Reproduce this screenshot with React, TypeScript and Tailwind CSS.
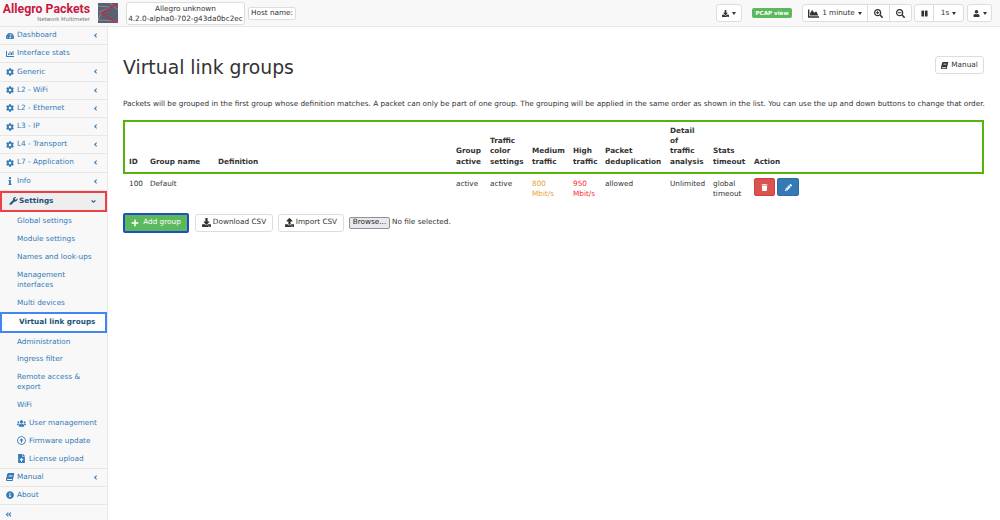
import React from 'react';
import {
  FaTachometerAlt, FaChartBar, FaCog, FaInfo, FaWrench, FaUsers, FaBook, FaInfoCircle, FaFileUpload,
  FaAngleLeft, FaAngleDown, FaAngleDoubleLeft, FaDownload, FaUpload, FaChartArea, FaSearchPlus, FaSearchMinus,
  FaPause, FaUser, FaPlus, FaTrash, FaPencilAlt, FaRegArrowAltCircleUp,
} from 'react-icons/fa';

const navLink = 'text-[#337ab7]';

const NavItem = ({ icon, label, arrow = true }: { icon: React.ReactNode; label: string; arrow?: boolean }) => (
  <div className={`h-[18.2px] flex items-center pl-[6px] pr-[6px] border-b border-[#e7e7e7] ${navLink}`}>
    <span className="w-[11px] flex justify-start text-[8px]">{icon}</span>
    <span>{label}</span>
    {arrow && <FaAngleLeft className="ml-auto mr-[2px] text-[7px]" />}
  </div>
);

const SubItem = ({ label, icon }: { label: React.ReactNode; icon?: React.ReactNode }) => (
  <div className={`pl-[17px] pr-1 py-[3.8px] leading-[10.2px] flex items-center whitespace-nowrap ${navLink}`}>
    {icon && <span className="w-[12px] text-[9px] flex">{icon}</span>}
    <span>{label}</span>
  </div>
);

const Btn = ({ children, className = '' }: { children: React.ReactNode; className?: string }) => (
  <div className={`h-[18px] flex items-center justify-center border border-[#ddd] rounded-[3px] bg-white text-[#333] whitespace-nowrap ${className}`}>{children}</div>
);

const Caret = () => <span className="ml-[3px] border-x-[2.5px] border-x-transparent border-t-[3px] border-t-[#333] w-0 h-0" />;

const thBase = 'border-y-2 border-[#56b30c] align-bottom text-left font-bold text-[#333] px-[6px] pb-[5px] leading-[10.3px] whitespace-nowrap';
const headers = [
  { w: 'w-[21px]', t: ['ID'] },
  { w: 'w-[68px]', t: ['Group name'] },
  { w: 'w-[238px]', t: ['Definition'] },
  { w: 'w-[34px]', t: ['Group', 'active'] },
  { w: 'w-[42px]', t: ['Traffic', 'color', 'settings'] },
  { w: 'w-[41px]', t: ['Medium', 'traffic'] },
  { w: 'w-[32px]', t: ['High', 'traffic'] },
  { w: 'w-[65px]', t: ['Packet', 'deduplication'] },
  { w: 'w-[43px]', t: ['Detail', 'of', 'traffic', 'analysis'] },
  { w: 'w-[41px]', t: ['Stats', 'timeout'] },
  { w: '', t: ['Action'] },
];

const tdBase = 'align-top px-[6px] pt-[5px] leading-[10.3px] text-[#333]';

export default function App() {
  return (
    <div className="w-[1000px] h-[520px] overflow-hidden bg-white text-[7.3px] flex flex-col font-['DejaVu_Sans',sans-serif]">
      {/* Top bar */}
      <header className="h-[27px] shrink-0 flex items-center bg-[#f8f8f8] border-b border-[#e7e7e7] pl-[3px] pr-[8px]">
        <div className="w-[95px] flex flex-col items-end pr-[8px] mt-[-2px]">
          <span className="text-[12.3px] font-bold leading-[14px] text-[#c8193f] whitespace-nowrap font-['Roboto',sans-serif]">Allegro Packets</span>
          <span className="text-[5.3px] leading-[7px] text-[#777] whitespace-nowrap">Network Multimeter</span>
        </div>
        <svg viewBox="0 0 20 20" className="w-[20px] h-[20px]">
          <rect width="20" height="20" fill="#5a6272" />
          <path d="M0 3 L12 4 M0 17 L20 18 M12 0 L20 7 M1 9 L12 5 M3 10 L0 17" stroke="#a0a7b3" strokeWidth="0.6" fill="none" />
          <path d="M18.6 0.7 L3.6 10 L15 18 L20 17.6" stroke="#d2213f" strokeWidth="1.2" fill="none" />
        </svg>
        <div className="ml-[8px] w-[119px] h-[23px] border border-[#ddd] rounded-[3px] bg-white text-[#333] text-center leading-[10.5px] pt-[1px] whitespace-nowrap">
          <div>Allegro unknown</div>
          <div>4.2.0-alpha0-702-g43da0bc2ec</div>
        </div>
        <div className="ml-[3px] h-[13px] w-[48px] border border-[#ddd] rounded-[2px] bg-white text-[#333] flex items-center justify-center whitespace-nowrap">Host name:</div>

        <Btn className="ml-auto w-[26px]"><FaDownload className="text-[7px]" /><Caret /></Btn>
        <span className="ml-[10px] h-[10px] w-[40px] rounded-[2px] bg-[#5cb85c] text-white font-bold text-[5.6px] flex items-center justify-center whitespace-nowrap">PCAP view</span>
        <div className="ml-[10px] flex">
          <Btn className="w-[66px] rounded-r-none"><FaChartArea className="text-[11px] mr-[3px]" /><span>1 minute</span><Caret /></Btn>
          <Btn className="w-[23px] rounded-none -ml-px"><FaSearchPlus className="text-[9px]" /></Btn>
          <Btn className="w-[23px] rounded-l-none -ml-px"><FaSearchMinus className="text-[9px]" /></Btn>
        </div>
        <div className="ml-[2px] flex">
          <Btn className="w-[20px] rounded-r-none"><FaPause className="text-[7px]" /></Btn>
          <Btn className="w-[31px] rounded-l-none -ml-px"><span>1s</span><Caret /></Btn>
        </div>
        <Btn className="ml-[3px] w-[25px]"><FaUser className="text-[7px]" /><Caret /></Btn>
      </header>

      <div className="flex flex-1 min-h-0">
        {/* Sidebar */}
        <aside className="w-[108px] shrink-0 bg-[#f8f8f8] border-r border-[#e7e7e7] overflow-hidden">
          <NavItem icon={<FaTachometerAlt />} label="Dashboard" />
          <NavItem icon={<FaChartBar />} label="Interface stats" arrow={false} />
          <NavItem icon={<FaCog />} label="Generic" />
          <NavItem icon={<FaCog />} label="L2 - WiFi" />
          <NavItem icon={<FaCog />} label="L2 - Ethernet" />
          <NavItem icon={<FaCog />} label="L3 - IP" />
          <NavItem icon={<FaCog />} label="L4 - Transport" />
          <NavItem icon={<FaCog />} label="L7 - Application" />
          <NavItem icon={<FaInfo />} label="Info" />
          <div className="h-[21px] flex items-center pl-[6px] pr-[8px] border-2 border-[#ee3e46] bg-[#eeeeee] text-[#23527c] font-bold">
            <FaWrench className="text-[8px] w-[11px]" />
            <span>Settings</span>
            <FaAngleDown className="ml-auto text-[7px]" />
          </div>
          <div className="pt-[1px]">
            <SubItem label="Global settings" />
            <SubItem label="Module settings" />
            <SubItem label="Names and look-ups" />
            <SubItem label={<>Management<br />interfaces</>} />
            <SubItem label="Multi devices" />
            <div className="h-[21px] flex items-center pl-[17px] border-2 border-[#4285f4] bg-white text-[#23527c] font-bold whitespace-nowrap">Virtual link groups</div>
            <SubItem label="Administration" />
            <SubItem label="Ingress filter" />
            <SubItem label={<>Remote access &amp;<br />export</>} />
            <SubItem label="WiFi" />
            <SubItem icon={<FaUsers />} label="User management" />
            <SubItem icon={<FaRegArrowAltCircleUp />} label="Firmware update" />
            <SubItem icon={<FaFileUpload />} label="License upload" />
          </div>
          <div className="border-t border-[#e7e7e7]">
            <NavItem icon={<FaBook className="-skew-x-12" />} label="Manual" />
            <NavItem icon={<FaInfoCircle />} label="About" arrow={false} />
            <div className={`h-[18px] flex items-center pl-[5px] ${navLink}`}><FaAngleDoubleLeft className="text-[7px]" /></div>
          </div>
        </aside>

        {/* Content */}
        <main className="flex-1 min-w-0 pl-[15px] pr-[16px] text-[#333]">
          <div className="flex items-start justify-between mt-[29px] pb-[14px]">
            <h1 className="text-[18.8px] leading-[24px] text-[#333]">Virtual link groups</h1>
            <Btn className="w-[49px]"><FaBook className="text-[7px] mr-[3px] -skew-x-12" /><span>Manual</span></Btn>
          </div>
          <p className="mt-[5px] leading-[10px] whitespace-nowrap">Packets will be grouped in the first group whose definition matches. A packet can only be part of one group. The grouping will be applied in the same order as shown in the list. You can use the up and down buttons to change that order.</p>

          <table className="mt-[11px] w-[861px] border-separate border-spacing-0 table-fixed">
            <thead>
              <tr className="h-[54px]">
                {headers.map((h, i) => (
                  <th
                    key={i}
                    className={`${thBase} ${h.w} ${i === 0 ? 'border-l-2 !pl-[4px]' : ''} ${i === headers.length - 1 ? 'border-r-2' : ''}`}
                  >
                    {h.t.map((line) => <div key={line}>{line}</div>)}
                  </th>
                ))}
              </tr>
            </thead>
            <tbody>
              <tr>
                <td className={tdBase}>100</td>
                <td className={tdBase}>Default</td>
                <td className={tdBase} />
                <td className={tdBase}>active</td>
                <td className={tdBase}>active</td>
                <td className={`${tdBase} !text-[#e8a33a]`}>800 Mbit/s</td>
                <td className={`${tdBase} !text-[#fb2a2a]`}>950 Mbit/s</td>
                <td className={tdBase}>allowed</td>
                <td className={tdBase}>Unlimited</td>
                <td className={tdBase}>global timeout</td>
                <td className={tdBase}>
                  <div className="flex gap-[2px] -mt-[1px]">
                    <div className="w-[21px] h-[18px] rounded-[2px] bg-[#d9534f] border border-[#d43f3a] text-white flex items-center justify-center"><FaTrash className="text-[7px]" /></div>
                    <div className="w-[22px] h-[18px] rounded-[2px] bg-[#337ab7] border border-[#2e6da4] text-white flex items-center justify-center"><FaPencilAlt className="text-[7px]" /></div>
                  </div>
                </td>
              </tr>
            </tbody>
          </table>

          <div className="mt-[13px] flex items-center">
            <div className="w-[66px] h-[20px] rounded-[2px] border-2 border-[#1f4fbf] bg-[#5cb85c] text-white flex items-center justify-center whitespace-nowrap">
              <FaPlus className="text-[8px] mr-[4px]" /><span>Add group</span>
            </div>
            <Btn className="ml-[6px] w-[78px]"><FaDownload className="text-[9px] mr-[2px]" /><span>Download CSV</span></Btn>
            <Btn className="ml-[5px] w-[66px]"><FaUpload className="text-[9px] mr-[2px]" /><span>Import CSV</span></Btn>
            <div className="ml-[5px] h-[12px] w-[41px] rounded-[2px] border border-[#8f8f9d] bg-[#e9e9ed] text-[#222] flex items-center justify-center">Browse...</div>
            <span className="ml-[2px] text-[#333]">No file selected.</span>
          </div>
        </main>
      </div>
    </div>
  );
}
